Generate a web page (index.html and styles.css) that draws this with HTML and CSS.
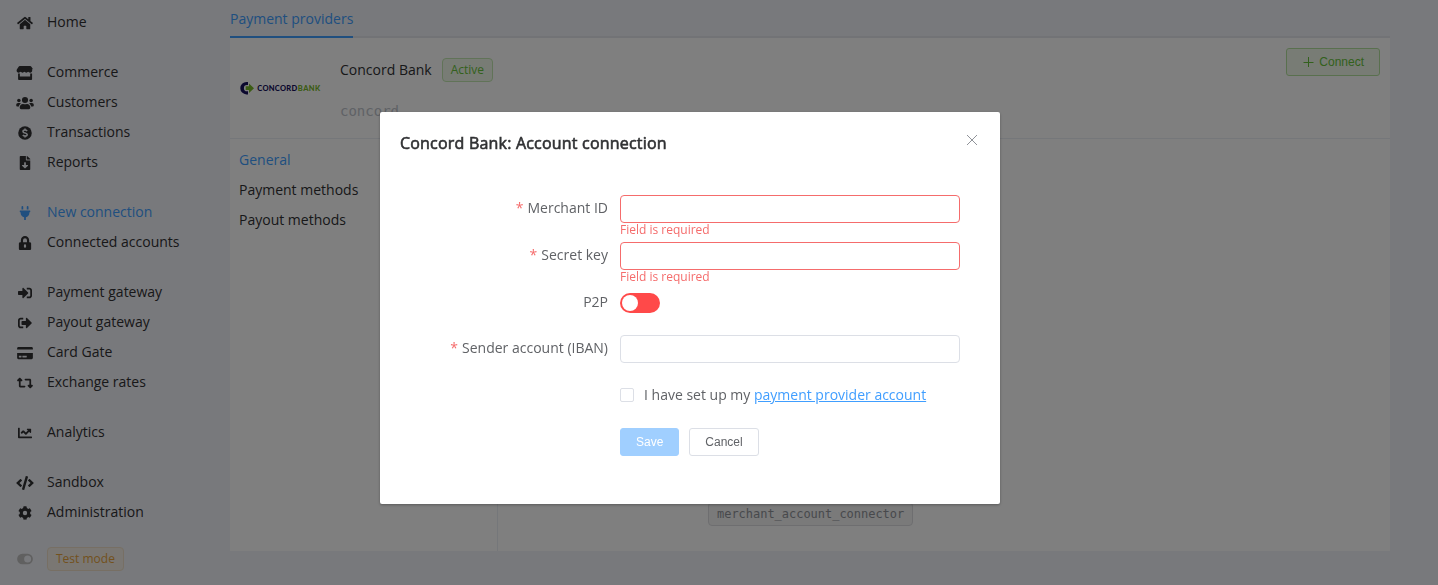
FILE: index.html
```html
<!DOCTYPE html>
<html lang="en">
<head>
<meta charset="utf-8">
<title>Payment providers</title>
<link rel="stylesheet" href="styles.css">
</head>
<body>
<div class="app">
  <nav class="sidebar">
    <div class="group">
      <a class="item"><svg class="icon" viewBox="0 0 576 512"><path d="M280 148 96 300v164a16 16 0 0 0 16 16h112a16 16 0 0 0 16-16v-96a16 16 0 0 1 16-16h64a16 16 0 0 1 16 16v96a16 16 0 0 0 16 16h112a16 16 0 0 0 16-16V300L296 148a12 12 0 0 0-16 0zM572 251l-84-69V44a12 12 0 0 0-12-12h-56a12 12 0 0 0-12 12v72l-90-73a48 48 0 0 0-61 0L4 251a12 12 0 0 0-1 17l25 31a12 12 0 0 0 17 2L280 107a12 12 0 0 1 15 0l236 194a12 12 0 0 0 17-2l25-31a12 12 0 0 0-1-17z"/></svg>Home</a>
    </div>
    <div class="group">
      <a class="item"><svg class="icon" viewBox="0 0 616 512"><path d="m602 119-61-96C532 9 516 0 499 0H117c-17 0-33 9-42 23L14 119c-32 49-4 117 54 125 4 0 8 1 12 1 28 0 52-12 69-31 17 19 41 31 68 31 28 0 52-12 69-31 17 19 41 31 69 31 27 0 51-12 68-31 17 19 41 31 69 31 4 0 8 0 12-1 58-8 87-76 56-125zM529 277c-11 0-21-2-32-4v111H119V273c-10 2-21 4-32 4-6 0-13 0-19-1-6-1-10-2-13-3v207c0 18 14 32 32 32h448c18 0 32-14 32-32V273c-5 1-10 2-14 3-7 1-13 1-24 1z"/></svg>Commerce</a>
      <a class="item"><svg class="icon" viewBox="0 0 640 512"><circle cx="96" cy="160" r="64"/><circle cx="544" cy="160" r="64"/><circle cx="320" cy="144" r="112"/><path d="M576 256h-64c-18 0-34 7-45 19 40 22 69 62 75 109h66c18 0 32-14 32-32v-32c0-35-29-64-64-64zM397 288h-8c-42 20-96 20-138 0h-8c-64 0-115 52-115 115v29c0 27 22 48 48 48h288c27 0 48-21 48-48v-29c0-63-51-115-115-115zM173 275c-11-12-27-19-45-19H64c-35 0-64 29-64 64v32c0 18 14 32 32 32h66c6-47 35-87 75-109z"/></svg>Customers</a>
      <a class="item"><svg class="icon" viewBox="0 0 512 512"><circle cx="256" cy="256" r="248"/><path class="cut" d="M256 92v50M256 370v50M334 180c-18-22-44-35-76-35-45 0-76 21-76 54 0 78 154 36 154 113 0 36-34 56-78 56-36 0-64-15-80-40"/></svg>Transactions</a>
      <a class="item"><svg class="icon" viewBox="0 0 384 512"><path fill-rule="evenodd" d="M224 136V0H24C11 0 0 11 0 24v464c0 13 11 24 24 24h336c13 0 24-11 24-24V160H248c-13 0-24-11-24-24zm76 217-96 95c-6 7-17 7-24 0l-96-95c-10-10-3-28 12-28h64v-85c0-9 7-16 16-16h32c9 0 16 7 16 16v85h64c15 0 22 18 12 28zM377 105 279 7c-4-5-11-7-17-7h-6v128h128v-6c0-6-2-12-7-17z"/></svg>Reports</a>
    </div>
    <div class="group">
      <a class="item active"><svg class="icon" viewBox="0 0 384 512"><path d="M320 32a32 32 0 0 0-64 0v96h64zM368 160H16c-9 0-16 7-16 16v32c0 9 7 16 16 16h16v32c0 77 55 142 128 157v99h64v-99c73-15 128-80 128-157v-32h16c9 0 16-7 16-16v-32c0-9-7-16-16-16zM128 32a32 32 0 0 0-64 0v96h64z"/></svg>New connection</a>
      <a class="item"><svg class="icon" viewBox="0 0 448 512"><path fill-rule="evenodd" d="M400 224h-24v-72C376 68 308 0 224 0S72 68 72 152v72H48c-27 0-48 21-48 48v192c0 27 21 48 48 48h352c27 0 48-21 48-48V272c0-27-21-48-48-48zM264 392a40 40 0 0 1-80 0v-48a40 40 0 0 1 80 0zm32-168H152v-72a72 72 0 0 1 144 0z"/></svg>Connected accounts</a>
    </div>
    <div class="group">
      <a class="item"><svg class="icon" viewBox="0 0 512 512"><path d="M416 448h-84c-7 0-12-5-12-12v-40c0-7 5-12 12-12h84c18 0 32-14 32-32V160c0-18-14-32-32-32h-84c-7 0-12-5-12-12V76c0-7 5-12 12-12h84c53 0 96 43 96 96v192c0 53-43 96-96 96zm-47-209L201 71c-15-15-41-5-41 17v96H24c-13 0-24 11-24 24v96c0 13 11 24 24 24h136v96c0 22 26 32 41 17l168-168c9-9 9-25 0-34z"/></svg>Payment gateway</a>
      <a class="item"><svg class="icon" viewBox="0 0 512 512"><path d="M497 273 329 441c-15 15-41 5-41-17v-96H152c-13 0-24-11-24-24v-96c0-13 11-24 24-24h136V88c0-21 26-32 41-17l168 168c9 9 9 25 0 34zM192 436v-40c0-7-5-12-12-12H96c-18 0-32-14-32-32V160c0-18 14-32 32-32h84c7 0 12-5 12-12V76c0-7-5-12-12-12H96c-53 0-96 43-96 96v192c0 53 43 96 96 96h84c7 0 12-5 12-12z"/></svg>Payout gateway</a>
      <a class="item"><svg class="icon" viewBox="0 0 576 512"><path fill-rule="evenodd" d="M0 432c0 27 22 48 48 48h480c27 0 48-21 48-48V256H0zm192-68c0-7 5-12 12-12h136c7 0 12 5 12 12v40c0 7-5 12-12 12H204c-7 0-12-5-12-12zm-128 0c0-7 5-12 12-12h72c7 0 12 5 12 12v40c0 7-5 12-12 12H76c-7 0-12-5-12-12zM576 80v48H0V80c0-26 22-48 48-48h480c27 0 48 22 48 48z"/></svg>Card Gate</a>
      <a class="item"><svg class="icon" viewBox="0 0 576 512"><path d="M272 416c18 0 32-14 32-32s-14-32-32-32H128V192h32c13 0 25-8 30-20s2-26-7-35l-64-64c-13-12-33-12-46 0L9 137c-9 9-12 23-7 35s17 20 30 20h32v176c0 26 22 48 48 48zM304 96c-18 0-32 14-32 32s14 32 32 32h144v160h-32c-13 0-25 8-30 20s-2 26 7 35l64 64c13 12 33 12 46 0l64-64c9-9 12-23 7-35s-17-20-30-20h-32V144c0-26-22-48-48-48z"/></svg>Exchange rates</a>
    </div>
    <div class="group">
      <a class="item"><svg class="icon" viewBox="0 0 512 512"><path d="M496 384H64V80c0-9-7-16-16-16H16C7 64 0 71 0 80v336c0 18 14 32 32 32h464c9 0 16-7 16-16v-32c0-9-7-16-16-16zM464 96H346c-21 0-32 26-17 41l32 32-73 73-73-73c-13-12-33-12-46 0l-64 64c-6 7-6 17 0 23l23 23c6 6 16 6 22 0l42-42 73 73c13 13 33 13 46 0l96-96 32 32c15 15 41 5 41-17V112c0-9-7-16-16-16z"/></svg>Analytics</a>
    </div>
    <div class="group">
      <a class="item"><svg class="icon" viewBox="0 0 640 512"><path d="m279 511-61-17c-7-2-10-9-8-15L346 9c2-6 8-10 15-8l61 17c6 2 10 9 8 15L294 503c-2 7-9 10-15 8zM165 400l43-46c5-5 4-13-1-18l-90-80 90-80c5-4 6-12 1-17l-43-47c-5-4-12-5-17 0L4 247c-5 5-5 13 0 18l144 135c5 5 12 5 17 0zm327 0 144-135c5-5 5-13 0-18L492 112c-5-5-12-5-17 0l-43 46c-5 5-4 13 1 18l90 80-90 80c-5 5-6 13-1 18l43 46c5 5 12 5 17 0z"/></svg>Sandbox</a>
      <a class="item"><svg class="icon" viewBox="0 0 512 512"><path fill-rule="evenodd" d="m487 316-42-25c4-23 4-47 0-70l42-25c5-3 7-8 6-14-11-35-30-67-55-94-4-4-10-5-15-3l-42 25c-18-16-38-27-61-35V26c0-5-4-10-9-12-36-8-74-7-109 0-6 2-10 7-10 12v49c-22 8-43 20-60 35L89 85c-4-2-10-1-14 3-25 27-44 59-56 94-1 6 1 11 6 14l43 25c-5 23-5 47 0 70l-43 25c-4 3-7 8-5 14 11 35 30 67 55 94 4 4 10 5 14 3l43-25c18 16 38 27 60 35v49c0 5 4 10 10 12 36 8 73 7 109 0 5-2 9-7 9-12v-49c23-8 44-20 61-35l42 25c5 2 11 1 15-3 25-27 44-59 55-94 1-6-1-11-6-14zM256 336a80 80 0 1 1 0-160 80 80 0 0 1 0 160z"/></svg>Administration</a>
    </div>
    <div class="mode"><svg class="icon muted" viewBox="0 0 576 512"><path fill-rule="evenodd" d="M384 64H192a192 192 0 0 0 0 384h192a192 192 0 0 0 0-384zm0 320a128 128 0 1 1 0-256 128 128 0 0 1 0 256z"/></svg><span class="tag warning">Test mode</span></div>
  </nav>
  <main class="main">
    <div class="tabs"><a class="tab">Payment providers</a></div>
    <section class="card">
      <header class="provider">
        <svg class="logo" viewBox="0 0 80 13"><path fill="#17115c" d="M8 0H6.500a6.200 6.200 0 0 0 0 12.400H8V9.300H7a3.100 3.100 0 0 1 0-6.200h1z"/><path fill="#79b82a" d="M5.700 4.300H9V1.500l5 4.700-5 4.700V8.100H5.700z"/><text class="logo-text" x="17.300" y="8.900" textLength="39.800" fill="#17115c">CONCORD</text><text class="logo-text" x="57.800" y="8.900" textLength="22.500" fill="#79b82a">BANK</text></svg>
        <div class="summary">
          <div class="name">Concord Bank<span class="tag success">Active</span></div>
          <div class="code">concord</div>
        </div>
        <button class="button connect"><svg class="plus" viewBox="0 0 12 12"><path d="M6.500 1v10M1.500 6.500h10"/></svg>Connect</button>
      </header>
      <div class="content">
        <nav class="subnav"><a class="sub active">General</a><a class="sub">Payment methods</a><a class="sub">Payout methods</a></nav>
        <div class="details"><span class="tag info">merchant_account_connector</span></div>
      </div>
    </section>
  </main>
</div>
<div class="overlay">
  <div class="dialog">
    <div class="dialog-head"><h2 class="title">Concord Bank: Account connection</h2><svg class="close" viewBox="0 0 12 12"><path d="m1 1 10 10M11 1 1 11"/></svg></div>
    <form class="form">
      <div class="row"><label class="label required">Merchant ID</label><div class="field"><input class="input invalid"><div class="error">Field is required</div></div></div>
      <div class="row"><label class="label required">Secret key</label><div class="field"><input class="input invalid"><div class="error">Field is required</div></div></div>
      <div class="row short"><label class="label">P2P</label><div class="field"><span class="switch"><span class="knob"></span></span></div></div>
      <div class="row"><label class="label required">Sender account (IBAN)</label><div class="field"><input class="input"></div></div>
      <div class="row indent"><span class="checkbox"></span><span>I have set up my <a class="link">payment provider account</a></span></div>
      <div class="row indent actions"><button class="button primary" type="button">Save</button><button class="button" type="button">Cancel</button></div>
    </form>
  </div>
</div>
</body>
</html>
```
FILE: styles.css
```css
* { box-sizing: border-box; }
body { margin: 0; height: 585px; overflow: hidden; background: #f0f2f8; color: #303133; font: 14px/30px "Open Sans", sans-serif; }
.app { display: flex; height: 585px; }
.sidebar { width: 230px; flex: none; padding-top: 7px; }
.group { margin-bottom: 20px; }
.item { display: flex; align-items: center; height: 30px; padding-left: 15px; }
.item.active, .sub.active { color: #409eff; }
.icon { flex: none; height: 14px; width: 20px; margin: 1px 12px 0 0; fill: currentColor; }
.cut { fill: none; stroke: #f0f2f8; stroke-width: 56; }
.mode { display: flex; align-items: center; height: 24px; padding-left: 15px; }
.muted { color: #c0c0c0; margin-top: 0; }
.tag { display: inline-block; height: 24px; padding: 0 8px; border: 1px solid; border-radius: 4px; font-size: 12px; line-height: 22px; white-space: nowrap; }
.warning { color: #e6a23c; background: #f4efe6; border-color: #efdfc8; }
.success { color: #67c23a; background: #f0f9eb; border-color: #c2e7b0; margin-left: 10px; }
.info { color: #909399; background: #f4f4f5; border-color: #dcdde0; font-family: "DejaVu Sans Mono", monospace; letter-spacing: -.024px; }
.main { width: 1160px; }
.tabs { display: flex; height: 38px; border-bottom: 2px solid #e4e7ed; }
.tab { height: 38px; line-height: 38px; color: #409eff; border-bottom: 2px solid #409eff; }
.card { height: 513px; display: flex; flex-direction: column; background: #fff; }
.provider { display: flex; height: 101px; padding: 10px; border-bottom: 1px solid #ebeef5; }
.logo { width: 80px; height: 13px; margin: 34px 20px 0 0; overflow: visible; }
.logo-text { font: 900 7.5px Lato, sans-serif; }
.summary { flex: 1; }
.name { display: flex; align-items: center; height: 24px; margin-top: 10px; }
.code { margin-top: 14px; color: #c0c4cc; font-family: "DejaVu Sans Mono", monospace; }
.button { height: 28px; padding: 0 15px; border: 1px solid #dcdfe6; border-radius: 3px; background: #fff; color: #606266; font: 12px "Liberation Sans", sans-serif; }
.connect { display: flex; align-items: center; gap: 5px; color: #67c23a; background: #f0f9eb; border-color: #b3e19d; }
.plus { width: 12px; height: 12px; fill: none; stroke: currentColor; }
.content { display: flex; flex: 1; }
.subnav { display: flex; flex-direction: column; width: 268px; padding: 6px 9px; border-right: 1px solid #ebeef5; }
.details { flex: 1; display: flex; align-items: flex-end; padding: 0 0 25px 210px; }
.overlay { position: fixed; inset: 0; padding: 112px 0 0 380px; background: rgba(0, 0, 0, .5); }
.dialog { width: 620px; height: 392px; background: #fff; border-radius: 2px; box-shadow: 0 1px 3px rgba(0, 0, 0, .3); color: #606266; }
.dialog-head { display: flex; justify-content: space-between; padding: 15px 22px 0 20px; height: 83px; }
.title { margin: 0; color: #303133; font-size: 16px; line-height: 32px; font-weight: 400; letter-spacing: .2px; -webkit-text-stroke: .6px #303133; }
.close { width: 12px; height: 12px; margin-top: 7px; fill: none; stroke: #909399; }
.row { display: flex; height: 47px; }
.label { width: 228px; margin-right: 12px; text-align: right; line-height: 26px; }
.required::before { content: "*"; color: #f56c6c; margin-right: 4px; }
.field { width: 340px; }
.input { display: block; width: 340px; height: 28px; border: 1px solid #dcdfe6; border-radius: 4px; background: #fff; }
.invalid { border-color: #f56c6c; }
.error { color: #f56c6c; font-size: 12px; line-height: 12px; padding-top: 1px; }
.short { height: 46px; }
.switch { display: flex; align-items: center; width: 40px; height: 20px; margin-top: 4px; padding: 2px; border-radius: 10px; background: #ff4949; }
.knob { width: 16px; height: 16px; border-radius: 50%; background: #fff; }
.indent { padding-left: 240px; align-items: center; height: 28px; margin-top: -1px; }
.checkbox { width: 14px; height: 14px; margin-right: 10px; border: 1px solid #dcdfe6; border-radius: 2px; }
.link { color: #409eff; text-decoration: underline; }
.actions { gap: 10px; margin-top: 19px; }
.primary { color: #fff; background: #a0cfff; border-color: #a0cfff; }
```
